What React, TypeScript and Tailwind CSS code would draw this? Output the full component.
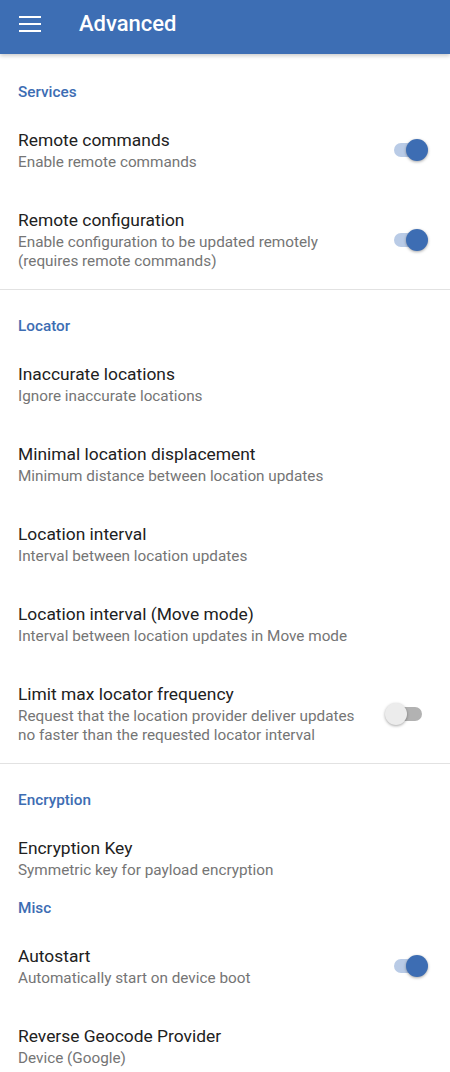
import React from "react";

type Item = { title: string; summary?: string; checked?: boolean };

function Toggle({ checked }: { checked: boolean }) {
  return (
    <div className="relative h-[22px] w-[44px] shrink-0">
      <div
        className={
          checked
            ? "absolute left-[10px] top-[4px] h-[14px] w-[28px] rounded-full bg-[#b9cbe6]"
            : "absolute left-[10px] top-[4px] h-[14px] w-[28px] rounded-full bg-[#b2b2b2]"
        }
      />
      <div
        className={
          checked
            ? "absolute left-[22px] top-0 h-[22px] w-[22px] rounded-full bg-[#3d6db3] shadow-[0_1px_3px_rgba(0,0,0,0.35)]"
            : "absolute left-[1px] top-0 h-[22px] w-[22px] rounded-full bg-[#ececec] shadow-[0_1px_3px_rgba(0,0,0,0.35)]"
        }
      />
    </div>
  );
}

function Category({ label, first, tight }: { label: string; first?: boolean; tight?: boolean }) {
  const pad = first ? "pt-[28px]" : tight ? "pt-0" : "pt-[26px]";
  return (
    <div className={`${pad} pb-[8px] pl-[18px]`}>
      <p className="text-[15.3px] font-medium leading-[20px] text-[#3d6db3]">{label}</p>
    </div>
  );
}

function Row({ title, summary, checked }: Item) {
  return (
    <div className="flex items-center py-[18px] pl-[18px] pr-[22px]">
      <div className="min-w-0 flex-1 pr-4">
        <p className="text-[17.4px] leading-[25px] text-[#212121]">{title}</p>
        {summary && <p className="text-[15.3px] leading-[19px] text-[#757575]">{summary}</p>}
      </div>
      {checked !== undefined && <Toggle checked={checked} />}
    </div>
  );
}

const Divider = () => <div className="h-px bg-[#e2e2e2]" />;

export default function App() {
  return (
    <div className="min-h-[1072px] bg-white font-['Roboto',sans-serif]">
      <header className="relative z-10 flex h-[54px] items-center bg-[#3d6eb4] pb-[6px] shadow-[0_2px_4px_rgba(0,0,0,0.2)]">
        <div className="ml-[19px] flex w-[22px] flex-col gap-[5px]">
          <span className="h-[2px] bg-white" />
          <span className="h-[2px] bg-white" />
          <span className="h-[2px] bg-white" />
        </div>
        <h1 className="ml-[38px] text-[22px] font-medium leading-[28px] text-white">Advanced</h1>
      </header>

      <Category label="Services" first />
      <Row title="Remote commands" summary="Enable remote commands" checked />
      <Row
        title="Remote configuration"
        summary="Enable configuration to be updated remotely (requires remote commands)"
        checked
      />
      <Divider />

      <Category label="Locator" />
      <Row title="Inaccurate locations" summary="Ignore inaccurate locations" />
      <Row title="Minimal location displacement" summary="Minimum distance between location updates" />
      <Row title="Location interval" summary="Interval between location updates" />
      <Row title="Location interval (Move mode)" summary="Interval between location updates in Move mode" />
      <Row
        title="Limit max locator frequency"
        summary="Request that the location provider deliver updates no faster than the requested locator interval"
        checked={false}
      />
      <Divider />

      <Category label="Encryption" />
      <Row title="Encryption Key" summary="Symmetric key for payload encryption" />
      <Category label="Misc" tight />
      <Row title="Autostart" summary="Automatically start on device boot" checked />
      <Row title="Reverse Geocode Provider" summary="Device (Google)" />
    </div>
  );
}
